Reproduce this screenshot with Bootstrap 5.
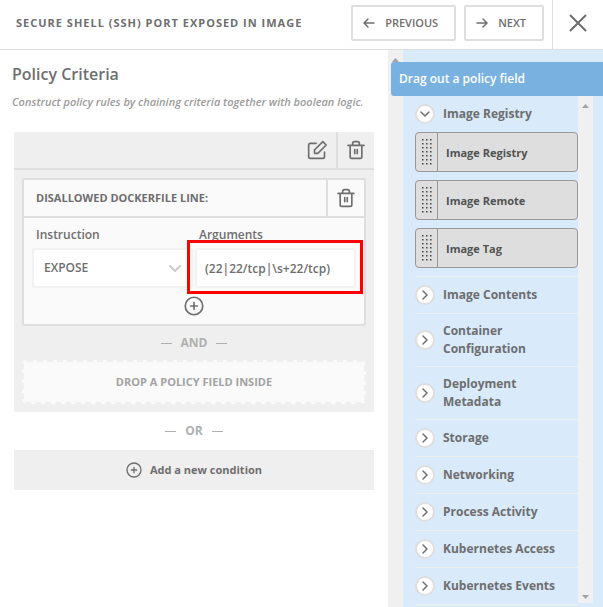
<!DOCTYPE html>
<html lang="en">
<head>
<meta charset="utf-8">
<meta name="viewport" content="width=device-width, initial-scale=1">
<title>Policy Criteria</title>
<link rel="stylesheet" href="https://cdn.jsdelivr.net/npm/bootstrap@5.3.0/dist/css/bootstrap.min.css">
<style>
:root{--ink:#6e6e6e;--line:#dedede;--panel:#efefef;--soft:#fafafa;--sky:#d9eafa}
body{font-family:"Open Sans","Noto Sans",sans-serif;font-size:12px;line-height:18px;color:var(--ink);background:#fff}
button{color:inherit}
svg{display:block;flex:none;fill:none;stroke:currentColor;stroke-width:2;stroke-linecap:round;stroke-linejoin:round}
.topbar{height:50px;border-bottom:1px solid var(--line)}
.topbar h1{font-size:11px;line-height:18px;font-weight:700;letter-spacing:1px}
.btn-step{height:36px;border:2px solid var(--line);border-radius:2px;font-size:11px;line-height:18px;font-weight:600;color:var(--ink);padding:0 16px 0 9px;gap:9px}
.btn-x{width:51px;border:0;border-left:1px solid var(--line);background:none}
.criteria{padding:12px 14px 0 14px}
.criteria h2{font-size:16px;line-height:24px;font-weight:600;margin:0 0 0 -2px}
.hint{font-size:11px;line-height:18px;font-weight:600;font-style:italic;color:#9b9b9b;margin:7px 0 21px -2px}
.track{width:15px;background:#f0f0f0}
.arrow-up,.arrow-down{width:7px;height:4px;background:#a3a3a3;clip-path:polygon(50% 0,100% 100%,0 100%)}
.arrow-down{clip-path:polygon(0 0,100% 0,50% 100%)}
.group-panel{background:var(--panel);border-radius:2px}
.group-head{height:38px;border-bottom:2px solid var(--line)}
.tool{width:38px;border:0;background:none;padding:0}
.tool-line{border-left:2px solid var(--line)}
.rule-box{border:2px solid var(--line);border-radius:3px;background:var(--soft)}
.rule-head{height:38px;border-bottom:2px solid var(--line);font-size:11px;font-weight:700}
.rule-head h3{font-size:11px;line-height:18px;font-weight:700}
.rule-body{padding:8px}
.fields{display:grid;grid-template-columns:1fr 1fr;gap:2px}
.fields label{font-weight:600;padding-left:4px;line-height:18px;margin-bottom:4px}
.field-box{width:100%;height:40px;border:2px solid #f2f2f2;border-radius:3px;background:#fff;color:var(--ink);font-size:12px;line-height:18px;font-weight:600;padding:0 10px;appearance:none}
input.field-box{padding:0 8px}
.pick svg{right:12px;top:15px;color:#ccc}
.highlight{top:-8px;right:-7px;bottom:-6px;left:-8px;border:3px solid #f00;pointer-events:none}
.plus{border:0;background:none;padding:0}
.joiner{height:34px;color:#b0b0b0;font-weight:700;gap:9px}
.joiner i{width:11px;height:1px;background:#b0b0b0}
.joiner-or{height:38px}
.dropzone{height:44px;border:2px dashed var(--panel);border-radius:5px;background:var(--soft);color:#a3a3a3;font-size:11px;font-weight:700}
.add{height:40px;border:0;background:var(--panel);font-size:11px;font-weight:700;gap:8px}
.side{width:200px;background:var(--sky)}
.side-title{height:34px;margin:12px 0 0 -12px;padding-left:8px;background:#79b1e0;color:#fff;font-size:12px;line-height:18px;font-weight:600;border-radius:3px 0 0 3px}
.fieldlist{padding-left:12px}
.side-end{width:10px}
.cat{width:100%;border:0;background:none;padding:8px 0;gap:8px;text-align:left;font-size:12px;line-height:18px;font-weight:700}
.cat b{font-weight:700;padding-right:16px}
.sec{border-bottom:1px solid #efefef}
.dot{width:20px;height:20px;border:2px solid var(--line);border-radius:50%;background:#fff;flex:none}
.chips{gap:8px;padding-bottom:8px}
.chip{height:40px;border:1px solid #999;border-radius:4px;background:#dedede;color:#525252;font-size:11px;line-height:18px;font-weight:700;padding:0;overflow:hidden}
.chip b{font-weight:700;padding-top:2px}
.grip{width:22px;border-right:1px solid #999}
.grip svg{fill:#444;stroke:none}
</style>
</head>
<body class="vh-100 d-flex flex-column overflow-hidden">
<svg class="d-none" aria-hidden="true">
<symbol id="grip" viewBox="0 0 10 26"><path d="M0 0h1.500v1.500H0zM4 0h1.500v1.500H4zM8 0h1.500v1.500H8zM0 4h1.500v1.500H0zM4 4h1.500v1.500H4zM8 4h1.500v1.500H8zM0 8h1.500v1.500H0zM4 8h1.500v1.500H4zM8 8h1.500v1.500H8zM0 12h1.500v1.500H0zM4 12h1.500v1.500H4zM8 12h1.500v1.500H8zM0 16h1.500v1.500H0zM4 16h1.500v1.500H4zM8 16h1.500v1.500H8zM0 20h1.500v1.500H0zM4 20h1.500v1.500H4zM8 20h1.500v1.500H8zM0 24h1.500v1.500H0zM4 24h1.500v1.500H4zM8 24h1.500v1.500H8z"/></symbol>
<symbol id="trash" viewBox="0 0 24 24"><path d="M2.500 6.500h19M19 6.500V20a2 2 0 0 1-2 2H7a2 2 0 0 1-2-2V6.500M8 6V4a2 2 0 0 1 2-2h4a2 2 0 0 1 2 2v2M10.500 11.500v5M13.500 11.500v5"/></symbol>
<symbol id="plus" viewBox="0 0 24 24"><circle cx="12" cy="12" r="10.500"/><path d="M12 8v8M8 12h8"/></symbol>
<symbol id="right" viewBox="0 0 12 12"><path d="M4 2l4 4-4 4"/></symbol>
</svg>
<header class="topbar d-flex align-items-stretch flex-shrink-0">
<h1 class="flex-grow-1 m-0 ps-3 align-self-center text-nowrap pb-1">SECURE SHELL (SSH) PORT EXPOSED IN IMAGE</h1>
<div class="d-flex align-items-center gap-2 pe-2 pb-1">
<button class="btn btn-step d-flex align-items-center"><svg width="14" height="14" viewBox="0 0 14 14"><path stroke-width="1.500" d="M12 7H2M6 3L2 7l4 4"/></svg>PREVIOUS</button>
<button class="btn btn-step d-flex align-items-center"><svg width="14" height="14" viewBox="0 0 14 14"><path stroke-width="1.500" d="M2 7h10M8 3l4 4-4 4"/></svg>NEXT</button>
</div>
<button class="btn-x d-flex align-items-center justify-content-center flex-shrink-0 pb-1" aria-label="Close"><svg width="18" height="18" viewBox="0 0 18 18"><path d="M1.500 1.500l15 15M16.500 1.500l-15 15"/></svg></button>
</header>
<div class="d-flex flex-grow-1 overflow-hidden">
<main class="criteria flex-grow-1">
<h2>Policy Criteria</h2>
<p class="hint text-nowrap">Construct policy rules by chaining criteria together with boolean logic.</p>
<section class="group-panel">
<div class="group-head d-flex justify-content-end">
<button class="tool d-flex align-items-center justify-content-center" aria-label="Edit"><svg width="20" height="20" viewBox="0 0 24 24"><path d="M21 14.500V20a2 2 0 0 1-2 2H4a2 2 0 0 1-2-2V6a2 2 0 0 1 2-2h7M19 2l4 4L13 16H9v-4z"/></svg></button>
<button class="tool tool-line d-flex align-items-center justify-content-center" aria-label="Delete condition"><svg width="20" height="20"><use href="#trash"/></svg></button>
</div>
<div class="p-2">
<div class="rule-box">
<div class="rule-head d-flex">
<h3 class="flex-grow-1 m-0 align-self-center ps-2 ms-1">DISALLOWED DOCKERFILE LINE:</h3>
<button class="tool tool-line d-flex align-items-center justify-content-center" aria-label="Delete field"><svg width="20" height="20"><use href="#trash"/></svg></button>
</div>
<div class="rule-body">
<div class="fields">
<div><label for="ins">Instruction</label><div class="pick position-relative"><select id="ins" class="field-box"><option>EXPOSE</option></select><svg class="position-absolute" width="12" height="12" viewBox="0 0 12 12"><path d="M1 3l5 5 5-5"/></svg></div></div>
<div><label for="arg">Arguments</label><div class="position-relative"><input id="arg" class="field-box" value="(22|22/tcp|\s+22/tcp)"><div class="highlight position-absolute"></div></div></div>
</div>
<div class="d-flex justify-content-center pt-2"><button class="plus" aria-label="Add value"><svg width="20" height="20"><use href="#plus"/></svg></button></div>
</div>
</div>
<div class="joiner d-flex align-items-center justify-content-center"><i></i>AND<i></i></div>
<div class="dropzone d-flex align-items-center justify-content-center">DROP A POLICY FIELD INSIDE</div>
</div>
</section>
<div class="joiner joiner-or d-flex align-items-center justify-content-center"><i></i>OR<i></i></div>
<button class="add w-100 d-flex align-items-center justify-content-center"><svg width="16" height="16"><use href="#plus"/></svg>Add a new condition</button>
</main>
<div class="track flex-shrink-0 d-flex justify-content-center pt-2"><div class="arrow-up"></div></div>
<aside class="side flex-shrink-0 d-flex flex-column">
<h2 class="side-title flex-shrink-0 mb-0 d-flex align-items-center position-relative">Drag out a policy field</h2>
<div class="d-flex flex-grow-1 overflow-hidden">
<div class="fieldlist flex-grow-1">
<div class="sec"><button class="cat d-flex align-items-center"><span class="dot d-flex align-items-center justify-content-center"><svg width="12" height="12" viewBox="0 0 12 12"><path stroke-width="1.500" d="M2 4l4 4 4-4"/></svg></span><b>Image Registry</b></button>
<div class="chips d-flex flex-column">
<button class="chip d-flex align-items-stretch"><span class="grip d-flex align-items-center justify-content-center"><svg width="10" height="26"><use href="#grip"/></svg></span><b class="align-self-center ps-2">Image Registry</b></button>
<button class="chip d-flex align-items-stretch"><span class="grip d-flex align-items-center justify-content-center"><svg width="10" height="26"><use href="#grip"/></svg></span><b class="align-self-center ps-2">Image Remote</b></button>
<button class="chip d-flex align-items-stretch"><span class="grip d-flex align-items-center justify-content-center"><svg width="10" height="26"><use href="#grip"/></svg></span><b class="align-self-center ps-2">Image Tag</b></button>
</div></div>
<div class="sec"><button class="cat d-flex align-items-center"><span class="dot d-flex align-items-center justify-content-center"><svg width="12" height="12"><use href="#right" stroke-width="1.500"/></svg></span><b>Image Contents</b></button></div>
<div class="sec"><button class="cat d-flex align-items-center"><span class="dot d-flex align-items-center justify-content-center"><svg width="12" height="12"><use href="#right" stroke-width="1.500"/></svg></span><b>Container Configuration</b></button></div>
<div class="sec"><button class="cat d-flex align-items-center"><span class="dot d-flex align-items-center justify-content-center"><svg width="12" height="12"><use href="#right" stroke-width="1.500"/></svg></span><b>Deployment Metadata</b></button></div>
<div class="sec"><button class="cat d-flex align-items-center"><span class="dot d-flex align-items-center justify-content-center"><svg width="12" height="12"><use href="#right" stroke-width="1.500"/></svg></span><b>Storage</b></button></div>
<div class="sec"><button class="cat d-flex align-items-center"><span class="dot d-flex align-items-center justify-content-center"><svg width="12" height="12"><use href="#right" stroke-width="1.500"/></svg></span><b>Networking</b></button></div>
<div class="sec"><button class="cat d-flex align-items-center"><span class="dot d-flex align-items-center justify-content-center"><svg width="12" height="12"><use href="#right" stroke-width="1.500"/></svg></span><b>Process Activity</b></button></div>
<div class="sec"><button class="cat d-flex align-items-center"><span class="dot d-flex align-items-center justify-content-center"><svg width="12" height="12"><use href="#right" stroke-width="1.500"/></svg></span><b>Kubernetes Access</b></button></div>
<div class="sec"><button class="cat d-flex align-items-center"><span class="dot d-flex align-items-center justify-content-center"><svg width="12" height="12"><use href="#right" stroke-width="1.500"/></svg></span><b>Kubernetes Events</b></button></div>
</div>
<div class="track flex-shrink-0 d-flex flex-column align-items-center justify-content-between pt-2 pb-1 mb-1"><div class="arrow-up"></div><div class="arrow-down"></div></div>
<div class="side-end flex-shrink-0"></div>
</div>
</aside>
</div>
<script src="https://cdn.jsdelivr.net/npm/bootstrap@5.3.0/dist/js/bootstrap.bundle.min.js"></script>
</body>
</html>
